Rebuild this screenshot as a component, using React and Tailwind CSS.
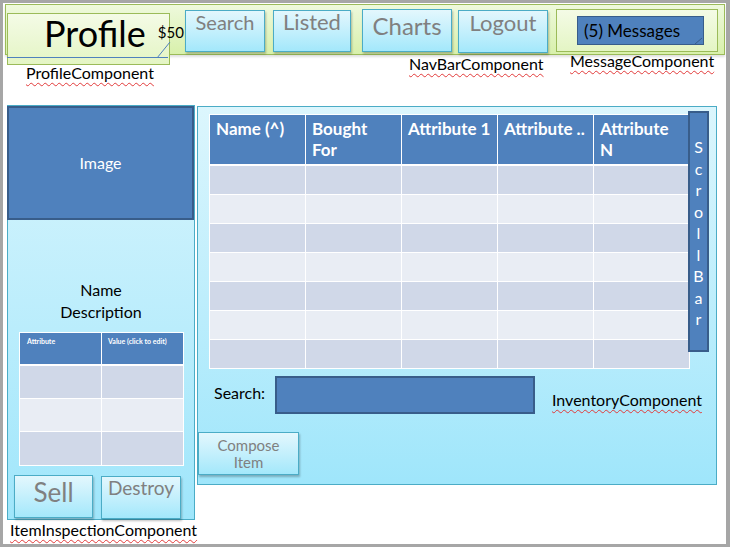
import React from 'react';

const rows = [0, 1, 2, 3, 4, 5, 6];
const cols = [0, 1, 2, 3, 4];
const scrollLetters = ['S', 'c', 'r', 'o', 'l', 'l', 'B', 'a', 'r'];

function Label({ children }) {
  return (
    <span className="whitespace-nowrap text-[16px] leading-none text-black underline decoration-wavy decoration-[#e23a3a] decoration-1 underline-offset-[3px]">
      {children}
    </span>
  );
}

function CyanButton({ children, className = '' }) {
  return (
    <div
      className={`shrink-0 flex flex-col items-center border border-[#4bacc6] bg-linear-to-b from-[#e3f7fd] to-[#a3e8fb] shadow-[1px_2px_2px_rgba(0,0,0,0.25)] text-[#808080] leading-none whitespace-nowrap ${className}`}
    >
      {children}
    </div>
  );
}

function ProfileBox() {
  return (
    <div className="relative ml-[1px] mt-[8px] h-[52px] w-[163px] shrink-0 border border-[#9bbb59] bg-linear-to-b from-[#f4fbe6] to-[#e4f5c4]">
      <div className="flex items-start pl-[36px] pt-[1px]">
        <span className="text-[36px] leading-none text-black">Profile</span>
        <span className="ml-[12px] mt-[10px] whitespace-nowrap text-[15px] leading-none text-black">$50</span>
      </div>
      <svg className="pointer-events-none absolute left-[-1px] top-[-1px]" width="165" height="54" viewBox="0 0 165 54">
        <line x1="0" y1="44.5" x2="161" y2="44.5" stroke="#4f81bd" strokeWidth="1" />
        <line x1="150" y1="45" x2="163" y2="29" stroke="#4f81bd" strokeWidth="1" />
      </svg>
    </div>
  );
}

function MessagesBox() {
  return (
    <div className="ml-[8px] mt-[4px] h-[43px] w-[162px] shrink-0 border border-[#9bbb59] bg-linear-to-b from-[#f4fbe6] to-[#e4f5c4]">
      <div className="relative ml-[20px] mt-[6px] flex h-[29px] w-[127px] items-center border-[1.5px] border-[#385d8a] bg-[#4f81bd] pl-[6px]">
        <span className="whitespace-nowrap text-[17px] leading-none text-black">(5) Messages</span>
        <svg className="absolute bottom-0 right-0" width="10" height="8" viewBox="0 0 10 8">
          <line x1="2" y1="8" x2="9" y2="2" stroke="#385d8a" strokeWidth="1" />
        </svg>
      </div>
    </div>
  );
}

function NavBar() {
  return (
    <div className="ml-[2px] mt-[1px] flex h-[51px] w-[720px] items-start border border-[#9bbb59] bg-linear-to-b from-[#eef9dc] to-[#d8f0ab] shadow-[0_2px_2px_rgba(0,0,0,0.12)]">
      <ProfileBox />
      <CyanButton className="ml-[15px] mt-[5px] h-[42px] w-[80px] pt-[1px] text-[20px]">Search</CyanButton>
      <CyanButton className="ml-[8px] mt-[5px] h-[42px] w-[78px] text-[22px]">Listed</CyanButton>
      <CyanButton className="ml-[11px] mt-[4px] h-[43px] w-[90px] pt-[4px] text-[24px]">Charts</CyanButton>
      <CyanButton className="ml-[6px] mt-[5px] h-[43px] w-[90px] pt-[1px] text-[22px]">Logout</CyanButton>
      <MessagesBox />
    </div>
  );
}

function ItemInspection() {
  return (
    <div className="w-[188px] shrink-0">
      <div className="flex h-[415px] flex-col border border-[#4bacc6] bg-linear-to-b from-[#d8f5fd] to-[#9fe6fb]">
        <div className="-ml-px flex h-[114px] w-[187px] items-center justify-center border-2 border-[#385d8a] bg-[#4f81bd] text-[16px] text-white">
          Image
        </div>
        <div className="mt-[59px] text-center text-[16px] leading-[22px] text-black">
          <div>Name</div>
          <div>Description</div>
        </div>
        <div className="ml-[11px] mt-[9px] w-[165px] bg-white p-px">
          <div className="grid h-[31px] grid-cols-2 gap-x-px">
            <div className="bg-[#4f81bd] pl-[7px] pt-[5px] text-[7px] font-bold leading-none text-white">Attribute</div>
            <div className="bg-[#4f81bd] pl-[6px] pt-[5px] text-[7px] font-bold leading-none text-white whitespace-nowrap">Value (click to edit)</div>
          </div>
          <div className="mt-[2px] flex flex-col gap-px">
            {['h-[32px] bg-[#d0d8e8]', 'h-[32px] bg-[#e9edf4]', 'h-[33px] bg-[#d0d8e8]'].map((c, i) => (
              <div key={i} className="grid grid-cols-2 gap-x-px">
                <div className={c} />
                <div className={c} />
              </div>
            ))}
          </div>
        </div>
        <div className="mt-[9px] flex items-start">
          <CyanButton className="ml-[6px] h-[43px] w-[79px] pt-[3px] text-[26px]">Sell</CyanButton>
          <CyanButton className="ml-[8px] mt-[1px] h-[43px] w-[80px] pt-[1px] text-[19px]">Destroy</CyanButton>
        </div>
      </div>
      <div className="-mt-[2px] ml-[3px]">
        <Label>ItemInspectionComponent</Label>
      </div>
    </div>
  );
}

function Inventory() {
  const heads = ['Name (^)', ['Bought', 'For'], 'Attribute 1', 'Attribute ..', ['Attribute', 'N']];
  return (
    <div className="ml-[2px] mt-[1px] h-[379px] w-[520px] shrink-0 border border-[#4bacc6] bg-linear-to-b from-[#dcf6fd] to-[#9fe6fb]">
      <div className="flex items-start">
        <div className="ml-[11px] mt-[7px] w-[481px] shrink-0 bg-white p-px">
          <div className="grid h-[49px] grid-cols-5 gap-x-px">
            {heads.map((h, i) => (
              <div key={i} className="bg-[#4f81bd] pl-[6px] pt-[3px] text-[17px] font-bold leading-[21px] text-white whitespace-nowrap">
                {Array.isArray(h) ? (
                  <>
                    {h[0]}
                    <br />
                    {h[1]}
                  </>
                ) : (
                  h
                )}
              </div>
            ))}
          </div>
          <div className="mt-[2px] flex flex-col gap-px">
            {rows.map((r) => (
              <div key={r} className="grid h-[28px] grid-cols-5 gap-x-px">
                {cols.map((c) => (
                  <div key={c} className={r % 2 === 0 ? 'bg-[#d0d8e8]' : 'bg-[#e9edf4]'} />
                ))}
              </div>
            ))}
          </div>
        </div>
        <div className="-ml-[2px] mt-[4px] flex h-[241px] w-[21px] shrink-0 flex-col items-center justify-center border-2 border-[#385d8a] bg-[#4f81bd] pt-[3px] text-[16px] leading-[21.5px] text-white">
          {scrollLetters.map((l, i) => (
            <span key={i}>{l}</span>
          ))}
        </div>
      </div>

      <div className="mt-[7px] flex items-start">
        <div className="ml-[16px] mt-[9px] w-[61px] shrink-0 text-[16px] leading-none text-black">Search:</div>
        <div className="h-[38px] w-[260px] shrink-0 border-2 border-[#385d8a] bg-[#4f81bd]" />
        <div className="ml-[17px] mt-[12px]">
          <Label>InventoryComponent</Label>
        </div>
      </div>

      <CyanButton className="mt-[18px] h-[43px] w-[101px] gap-[2px] pt-[5px] text-[15px]">
        <span>Compose</span>
        <span>Item</span>
      </CyanButton>
    </div>
  );
}

export default function App() {
  return (
    <div className="h-[547px] w-[730px] overflow-hidden bg-[#a6a6a6] pb-[3px] pl-[3px] pr-[4px] pt-[3px] font-['Lato',sans-serif]">
      <div className="h-full w-full overflow-hidden bg-white">
        <NavBar />

        <div className="flex h-[50px] items-start">
          <div className="w-[406px] shrink-0 pl-[23px] pt-[6px]">
            <Label>ProfileComponent</Label>
          </div>
          <div className="-mt-[3px] w-[161px] shrink-0">
            <Label>NavBarComponent</Label>
          </div>
          <div className="-mt-[6px] shrink-0">
            <Label>MessageComponent</Label>
          </div>
        </div>

        <div className="flex items-start pl-[4px]">
          <ItemInspection />
          <Inventory />
        </div>
      </div>
    </div>
  );
}
